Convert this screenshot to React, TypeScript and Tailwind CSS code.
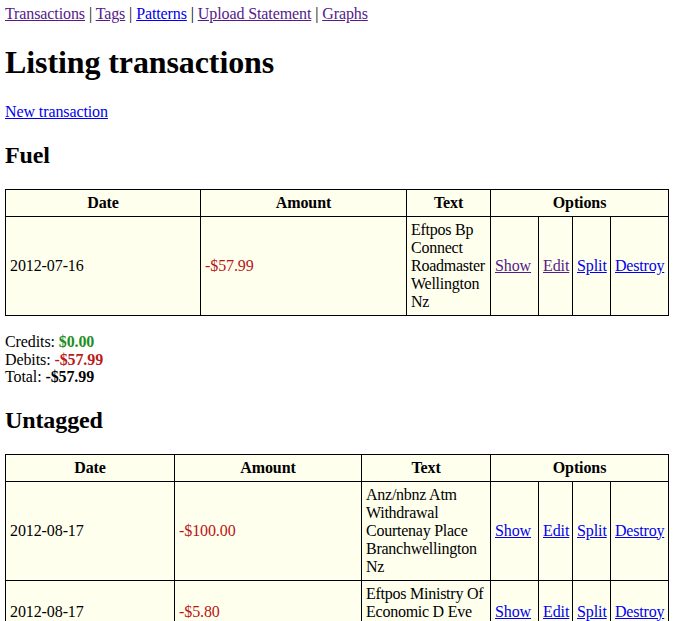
type Txn = {
  date: string;
  amount: string;
  text: string;
  visited?: { show?: boolean; edit?: boolean; split?: boolean; destroy?: boolean };
};

type Section = {
  title: string;
  cols: string[];
  rows: Txn[];
  summary?: { credits: string; debits: string; total: string };
};

const sections: Section[] = [
  {
    title: "Fuel",
    cols: ["w-[195px]", "w-[206px]", "w-[84px]", "w-[48px]", "w-[34px]", "w-[38px]", "w-[58px]"],
    rows: [
      {
        date: "2012-07-16",
        amount: "-$57.99",
        text: "Eftpos Bp Connect Roadmaster Wellington Nz",
        visited: { show: true, edit: true }
      }
    ],
    summary: { credits: "$0.00", debits: "-$57.99", total: "-$57.99" }
  },
  {
    title: "Untagged",
    cols: ["w-[169px]", "w-[187px]", "w-[129px]", "w-[48px]", "w-[34px]", "w-[38px]", "w-[58px]"],
    rows: [
      {
        date: "2012-08-17",
        amount: "-$100.00",
        text: "Anz/nbnz Atm Withdrawal Courtenay Place Branchwellington Nz"
      },
      {
        date: "2012-08-17",
        amount: "-$5.80",
        text: "Eftpos Ministry Of Economic D Eve Wellington Nz"
      }
    ]
  }
];

const Link = ({ children, visited }: { children: React.ReactNode; visited?: boolean }) => (
  <a href="#" className={visited ? "text-[#551a8b] underline" : "text-[#0000ee] underline"}>
    {children}
  </a>
);

const cell = "border border-black px-[4px] py-[4px] align-middle";

const TxnTable = ({ section }: { section: Section }) => (
  <>
    <h2 className="mt-[20px] text-[24px] leading-[28px] font-bold">{section.title}</h2>
    <table className="mt-[20px] w-[664px] table-fixed border-collapse border border-black bg-[#ffffee]">
      <colgroup>
        {section.cols.map((c, i) => (
          <col key={i} className={c} />
        ))}
      </colgroup>
      <thead>
        <tr>
          <th className={cell}>Date</th>
          <th className={cell}>Amount</th>
          <th className={cell}>Text</th>
          <th className={cell} colSpan={4}>
            Options
          </th>
        </tr>
      </thead>
      <tbody>
        {section.rows.map((r, i) => (
          <tr key={i}>
            <td className={cell}>{r.date}</td>
            <td className={`${cell} text-[#b81414]`}>{r.amount}</td>
            <td className={`${cell} tracking-[-0.25px]`}>{r.text}</td>
            <td className={cell}>
              <Link visited={r.visited?.show}>Show</Link>
            </td>
            <td className={cell}>
              <Link visited={r.visited?.edit}>Edit</Link>
            </td>
            <td className={cell}>
              <Link visited={r.visited?.split}>Split</Link>
            </td>
            <td className={`${cell} tracking-[-0.2px]`}>
              <Link visited={r.visited?.destroy}>Destroy</Link>
            </td>
          </tr>
        ))}
      </tbody>
    </table>
    {section.summary && (
      <p className="mt-[17px] leading-[17.5px]">
        Credits: <b className="text-[#1f8f1f]">{section.summary.credits}</b>
        <br />
        Debits: <b className="text-[#b81c1c]">{section.summary.debits}</b>
        <br />
        Total: <b>{section.summary.total}</b>
      </p>
    )}
  </>
);

export default function App() {
  return (
    <div className="min-h-screen bg-white p-[5px] font-['Liberation_Serif','Times_New_Roman',serif] text-[16px] leading-[18px] tracking-[-0.1px] text-black">
      <p>
        <Link visited>Transactions</Link> | <Link visited>Tags</Link> | <Link>Patterns</Link> |{" "}
        <Link visited>Upload Statement</Link> | <Link visited>Graphs</Link>
      </p>
      <h1 className="mt-[21px] text-[32px] leading-[37px] font-bold">Listing transactions</h1>
      <p className="mt-[22px]">
        <Link>New transaction</Link>
      </p>
      {sections.map((s) => (
        <TxnTable key={s.title} section={s} />
      ))}
    </div>
  );
}
